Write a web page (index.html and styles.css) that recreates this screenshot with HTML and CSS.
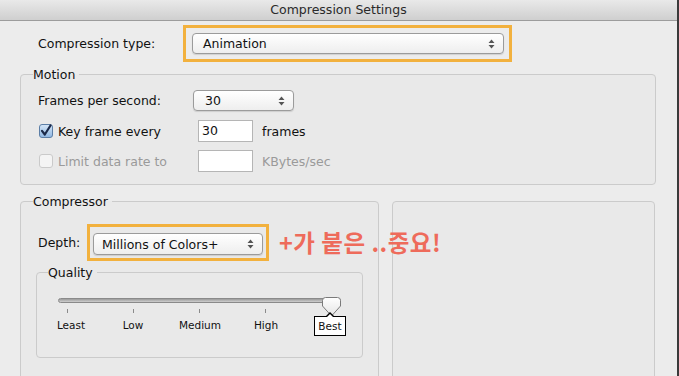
FILE: index.html
```html
<html>
<head>
  <title>Compression Settings</title>
  <link rel="stylesheet" href="styles.css">
</head>
<body>
  <div class="window">
    <div class="titlebar">Compression Settings</div>

    <div class="content">
      <div class="type-row">
        <div class="label type-label">Compression type:</div>
        <div class="highlight type-highlight">
          <div class="popup type-popup">
            <span>Animation</span>
            <svg class="arrows" width="7" height="10" viewBox="0 0 7 10"><path d="M3.5 0.5 L6.5 4 L0.5 4 Z M3.5 9.5 L6.5 6 L0.5 6 Z" fill="#555"/></svg>
          </div>
        </div>
      </div>

      <fieldset class="group motion">
        <legend>Motion</legend>
        <div class="form-row">
          <div class="label col-label">Frames per second:</div>
          <div class="popup fps-popup">
            <span>30</span>
            <svg class="arrows" width="7" height="10" viewBox="0 0 7 10"><path d="M3.5 0.5 L6.5 4 L0.5 4 Z M3.5 9.5 L6.5 6 L0.5 6 Z" fill="#555"/></svg>
          </div>
        </div>
        <div class="form-row">
          <div class="label col-label check-label">
            <svg class="checkbox" width="14" height="14" viewBox="0 0 14 14">
              <defs>
                <linearGradient id="cb" x1="0" y1="0" x2="0" y2="1">
                  <stop offset="0" stop-color="#d5e6f7"/>
                  <stop offset="1" stop-color="#8fb7e3"/>
                </linearGradient>
              </defs>
              <rect x="0.5" y="0.5" width="13" height="13" rx="2.5" fill="url(#cb)" stroke="#5c7ea6"/>
              <path d="M3 6.8 L5.8 10.5 L11.5 1.5" fill="none" stroke="#1c2a4a" stroke-width="2.2" stroke-linecap="round" stroke-linejoin="round"/>
            </svg>
            Key frame every
          </div>
          <div class="field">30</div>
          <div class="label unit">frames</div>
        </div>
        <div class="form-row disabled">
          <div class="label col-label check-label">
            <svg class="checkbox" width="14" height="14" viewBox="0 0 14 14">
              <rect x="0.5" y="0.5" width="13" height="13" rx="2.5" fill="#f4f4f4" stroke="#cacaca"/>
            </svg>
            Limit data rate to
          </div>
          <div class="field"></div>
          <div class="label unit">KBytes/sec</div>
        </div>
      </fieldset>

      <div class="lower">
        <fieldset class="group compressor">
          <legend>Compressor</legend>
          <div class="depth-row">
            <div class="label depth-label">Depth:</div>
            <div class="highlight depth-highlight">
              <div class="popup depth-popup">
                <span>Millions of Colors+</span>
                <svg class="arrows" width="7" height="10" viewBox="0 0 7 10"><path d="M3.5 0.5 L6.5 4 L0.5 4 Z M3.5 9.5 L6.5 6 L0.5 6 Z" fill="#555"/></svg>
              </div>
            </div>
            <div class="note">+가 붙은 ..중요!</div>
          </div>

          <fieldset class="group quality">
            <legend>Quality</legend>
            <div class="slider">
              <div class="track"></div>
              <svg class="thumb" width="19" height="20" viewBox="0 0 19 20">
                <defs>
                  <linearGradient id="th" x1="0" y1="0" x2="0" y2="1">
                    <stop offset="0" stop-color="#ffffff"/>
                    <stop offset="1" stop-color="#e4e4e4"/>
                  </linearGradient>
                </defs>
                <path d="M3.5 0.5 H15.5 Q18.5 0.5 18.5 3.5 V9 L9.5 19 L0.5 9 V3.5 Q0.5 0.5 3.5 0.5 Z" fill="url(#th)" stroke="#7a7a7a"/>
              </svg>
            </div>
            <div class="ticks">
              <span class="tick"></span>
              <span class="tick"></span>
              <span class="tick"></span>
              <span class="tick"></span>
              <span class="tick blank"></span>
            </div>
            <div class="stops">
              <span>Least</span>
              <span>Low</span>
              <span>Medium</span>
              <span>High</span>
              <span class="current">Best</span>
            </div>
          </fieldset>
        </fieldset>

        <div class="group preview"></div>
      </div>
    </div>
  </div>
</body>
</html>
```

FILE: styles.css
```css
body {
  margin: 0;
  width: 679px;
  height: 376px;
  overflow: hidden;
  background-color: #ececec;
  font-family: 'DejaVu Sans', sans-serif;
  font-size: 12.5px;
  color: #111;
}

.window {
  height: 376px;
  border-right: 2px solid #3a3a3a;
  box-sizing: border-box;
}

.titlebar {
  height: 20px;
  line-height: 20px;
  text-align: center;
  font-size: 12.5px;
  color: #2a2a2a;
  background: linear-gradient(#e9e9e9, #cfcfcf);
  border-bottom: 1px solid #9c9c9c;
}

.content {
  height: 355px;
  overflow: hidden;
  padding: 0 21px 0 20px;
}

.label {
  white-space: nowrap;
}

/* orange call-out boxes */
.highlight {
  border: 3px solid #f2b13e;
  box-sizing: border-box;
  flex-shrink: 0;
}

.type-row {
  display: flex;
  align-items: center;
  height: 43px;
  margin-top: 1px;
}

.type-label {
  width: 145px;
  padding-left: 18px;
}

.type-highlight {
  width: 329px;
  height: 37px;
  padding: 5px 0 0 6px;
}

.popup {
  display: flex;
  align-items: center;
  justify-content: space-between;
  height: 21px;
  box-sizing: border-box;
  padding: 0 8px 0 10px;
  border: 1px solid #9b9b9b;
  border-radius: 4px;
  background: linear-gradient(#ffffff, #eeeeee);
  box-shadow: 0 1px 1px rgba(0, 0, 0, 0.12);
}

.type-popup {
  width: 312px;
}

/* group boxes */
.group {
  border: 1px solid #cbcbcb;
  border-radius: 4px;
  background-color: #e9e9e9;
  margin: 0;
  min-width: 0;
  box-sizing: border-box;
}

.group legend {
  padding: 0 4px 0 0;
  font-size: 12.5px;
}

.motion {
  height: 118px;
  padding: 3px 0 0 17px;
  margin-top: 2px;
}

.motion legend {
  margin-left: -5px;
}

.form-row {
  display: flex;
  align-items: center;
  height: 30px;
}

.form-row:first-of-type {
  height: 31px;
}

.col-label {
  width: 155px;
}

.check-label {
  display: flex;
  align-items: center;
  gap: 5px;
  margin-left: 1px;
  width: 159px;
}

.fps-popup {
  width: 101px;
  padding-left: 11px;
}

.field {
  width: 55px;
  height: 22px;
  line-height: 20px;
  box-sizing: border-box;
  border: 1px solid #b5b5b5;
  background-color: #ffffff;
  padding-left: 3px;
  margin-right: 9px;
}

.disabled .label {
  color: #9a9a9a;
}

.lower {
  display: flex;
  gap: 13px;
  margin-top: 9px;
}

.compressor {
  flex-shrink: 0;
  width: 359px;
  height: 200px;
  padding: 15px 15px 0 15px;
}

.compressor > legend {
  margin-left: -3px;
}

.depth-row {
  display: flex;
  align-items: center;
  height: 37px;
  margin-left: 2px;
}

.depth-label {
  flex-shrink: 0;
  width: 49px;
}

.depth-highlight {
  width: 182px;
  height: 37px;
  padding: 6px 0 0 3px;
}

.depth-popup {
  width: 170px;
  height: 22px;
  padding-left: 8px;
}

/* the red note runs over the preview box */
.note {
  position: relative;
  z-index: 2;
  flex-shrink: 0;
  margin-left: 10px;
  font-family: 'Noto Sans CJK KR', sans-serif;
  font-weight: bold;
  font-size: 23.5px;
  line-height: 1;
  letter-spacing: 0.5px;
  color: #ee6b5b;
  white-space: nowrap;
}

.quality {
  margin-top: 4px;
  width: 327px;
  height: 93px;
  padding: 0;
}

.quality legend {
  margin-left: 11px;
}

.slider {
  position: relative;
  height: 11px;
  margin: 18px 0 0 21px;
  width: 283px;
}

.track {
  margin-top: 6px;
  height: 5px;
  border-radius: 3px;
  background: linear-gradient(#9a9a9a, #cfcfcf);
  border: 1px solid #8a8a8a;
  box-sizing: border-box;
}

/* thumb sits on top of the track */
.thumb {
  position: absolute;
  right: 0;
  top: -1px;
}

.ticks {
  display: flex;
  gap: 65px;
  margin: 0 0 0 30px;
}

.tick {
  width: 1px;
  height: 4px;
  background-color: #8a8a8a;
}

.tick.blank {
  background-color: transparent;
}

.stops {
  display: grid;
  grid-template-columns: 74px 50px 84px 48px 80px;
  justify-items: center;
  margin: 3px 0 0 -3px;
  font-size: 10.5px;
}

.stops span {
  line-height: 18px;
}

.stops .current {
  position: relative;
  z-index: 1;
  padding: 0 3px;
  border: 1px solid #000;
  background-color: #ffffff;
}

/* little tooltip pointer up to the thumb */
.stops .current::before,
.stops .current::after {
  content: '';
  position: absolute;
  left: 50%;
  border-style: solid;
  border-color: transparent;
}

.stops .current::before {
  top: -5px;
  margin-left: -5px;
  border-width: 0 5px 5px 5px;
  border-bottom-color: #000;
}

.stops .current::after {
  top: -3px;
  margin-left: -4px;
  border-width: 0 4px 4px 4px;
  border-bottom-color: #fff;
}

.preview {
  flex-shrink: 0;
  width: 263px;
  height: 200px;
  margin-top: 7px;
}
```
